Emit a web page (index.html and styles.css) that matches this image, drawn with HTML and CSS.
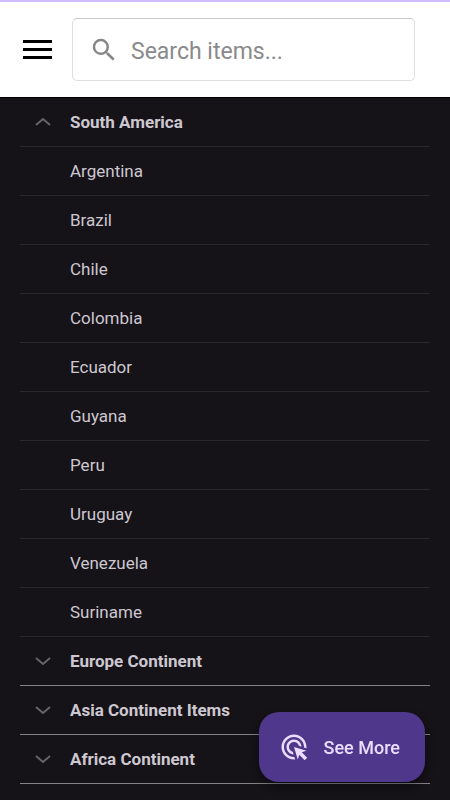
FILE: index.html
```html
<!DOCTYPE html>
<html lang="en">
<head>
<meta charset="utf-8">
<meta name="viewport" content="width=device-width, initial-scale=1">
<title>Items</title>
<link rel="stylesheet" href="styles.css">
</head>
<body>
<header class="topbar">
  <button class="menu" type="button" aria-label="Menu">
    <svg viewBox="0 0 29 20" width="29" height="20" aria-hidden="true"><path d="M0 0h29v3H0zM0 8h29v3H0zM0 16h29v3H0z"/></svg>
  </button>
  <label class="search">
    <svg viewBox="0 0 24 24" width="30" height="30" aria-hidden="true"><path d="M15.5 14h-.79l-.28-.27A6.471 6.471 0 0 0 16 9.5 6.5 6.5 0 1 0 9.5 16c1.61 0 3.09-.59 4.23-1.57l.27.28v.79l5 4.99L20.49 19l-4.99-5zm-6 0C7.01 14 5 11.99 5 9.5S7.01 5 9.5 5 14 7.01 14 9.5 11.99 14 9.5 14z"/></svg>
    <input type="search" placeholder="Search items..." aria-label="Search items">
  </label>
</header>
<main class="list">
  <section>
    <button class="row group open" type="button" aria-expanded="true">
      <svg class="chevron" viewBox="0 0 16 10" aria-hidden="true"><path d="M1 8l7-6 7 6"/></svg>South America
    </button>
    <ul class="items">
      <li class="row">Argentina</li>
      <li class="row">Brazil</li>
      <li class="row">Chile</li>
      <li class="row">Colombia</li>
      <li class="row">Ecuador</li>
      <li class="row">Guyana</li>
      <li class="row">Peru</li>
      <li class="row">Uruguay</li>
      <li class="row">Venezuela</li>
      <li class="row">Suriname</li>
    </ul>
  </section>
  <button class="row group" type="button" aria-expanded="false">
    <svg class="chevron" viewBox="0 0 16 10" aria-hidden="true"><path d="M1 2l7 6 7-6"/></svg>Europe Continent
  </button>
  <button class="row group" type="button" aria-expanded="false">
    <svg class="chevron" viewBox="0 0 16 10" aria-hidden="true"><path d="M1 2l7 6 7-6"/></svg>Asia Continent Items
  </button>
  <button class="row group" type="button" aria-expanded="false">
    <svg class="chevron" viewBox="0 0 16 10" aria-hidden="true"><path d="M1 2l7 6 7-6"/></svg>Africa Continent
  </button>
</main>
<button class="fab" type="button">
  <svg viewBox="0 0 24 24" width="30" height="30" aria-hidden="true"><path d="M11.71 17.99C8.53 17.84 6 15.22 6 12c0-3.31 2.69-6 6-6 3.22 0 5.84 2.53 5.99 5.71l-2.1-.63C15.48 9.31 13.89 8 12 8c-2.21 0-4 1.79-4 4 0 1.89 1.31 3.48 3.08 3.89l.63 2.1zM22 12c0 .3-.01.6-.04.9l-1.97-.59c.01-.1.01-.21.01-.31 0-4.42-3.58-8-8-8s-8 3.58-8 8 3.58 8 8 8c.1 0 .21 0 .31-.01l.59 1.97c-.3.03-.6.04-.9.04C6.48 22 2 17.52 2 12S6.48 2 12 2s10 4.48 10 10zm-3.77 4.26L22 15l-10-3 3 10 1.26-3.77 4.27 4.27 1.98-1.98-4.28-4.26z"/></svg>
  See More
</button>
</body>
</html>
```
FILE: styles.css
```css
* {
  box-sizing: border-box;
}

body {
  margin: 0;
  background: #151218;
  color: #cdc8d0;
  font-family: Roboto, sans-serif;
}

button {
  margin: 0;
  padding: 0;
  border: 0;
  background: none;
  color: inherit;
  font: inherit;
  text-align: left;
  cursor: pointer;
}

svg {
  flex: none;
  fill: currentColor;
}

.topbar {
  display: flex;
  align-items: center;
  gap: 20px;
  padding: 16px 35px 16px 20px;
  border-top: 2px solid #d0bcff;
  border-bottom: 1px solid #000;
  background: #fff;
}

.menu {
  display: flex;
  justify-content: flex-end;
  width: 32px;
  padding: 3px 0;
  color: #000;
}

.search {
  display: flex;
  flex: 1;
  align-items: center;
  gap: 12px;
  min-width: 0;
  height: 63px;
  padding: 0 16px;
  border: 1px solid #dedede;
  border-top-color: #c8c8c8;
  border-radius: 5px;
  color: #858585;
}

.search input {
  flex: 1;
  min-width: 0;
  padding: 4px 0 0;
  border: 0;
  outline: 0;
  background: none;
  color: #333;
  font: 23px/28px Roboto, sans-serif;
}

.search input::placeholder {
  color: #8a8a8a;
  opacity: 1;
}

.list {
  padding: 0 20px 16px;
}

.items {
  margin: 0;
  padding: 0;
  list-style: none;
}

.row {
  display: flex;
  align-items: center;
  width: 100%;
  height: 49px;
  padding: 0 0 0 50px;
  border-bottom: 1px solid #2a272d;
  font-size: 17px;
  line-height: 24px;
}

.group {
  gap: 19px;
  padding-left: 15px;
  border-bottom-color: #858287;
  font-weight: 700;
}

.open {
  border-bottom-color: #2a272d;
}

.chevron {
  width: 16px;
  height: 10px;
  fill: none;
  stroke: #67646a;
  stroke-width: 2;
}

.fab {
  position: fixed;
  right: 25px;
  bottom: 18px;
  display: flex;
  align-items: center;
  gap: 15px;
  height: 70px;
  padding: 0 25px 0 20px;
  border-radius: 20px;
  background: #4f378b;
  box-shadow: 0 4px 10px rgba(0, 0, 0, 0.4);
  color: #eaddff;
  font-size: 18px;
  font-weight: 500;
}
```
